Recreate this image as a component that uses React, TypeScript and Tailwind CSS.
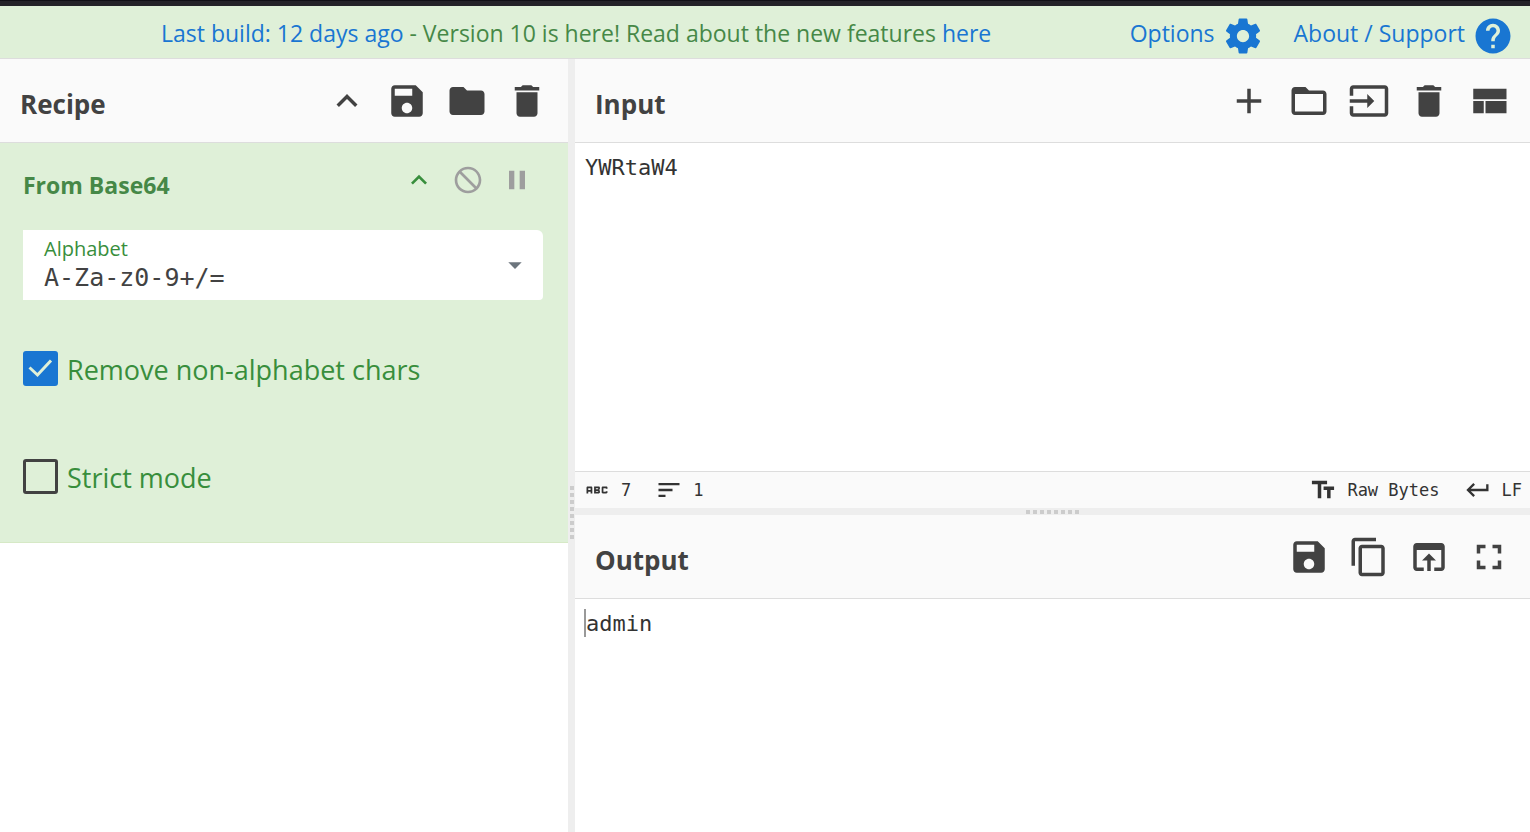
import { useState } from "react";
import type { ReactNode } from "react";

const ICONS = {
  expandLess: "M12 8l-6 6 1.41 1.41L12 10.83l4.59 4.58L18 14z",
  keyboardUp: "M7.41 15.41L12 10.83l4.59 4.58L18 14l-6-6-6 6z",
  save: "M17 3H5c-1.11 0-2 .9-2 2v14c0 1.1.89 2 2 2h14c1.1 0 2-.9 2-2V7l-4-4zm-5 16c-1.66 0-3-1.34-3-3s1.34-3 3-3 3 1.34 3 3-1.34 3-3 3zm3-10H5V5h10v4z",
  folder: "M10 4H4c-1.1 0-1.99.9-1.99 2L2 18c0 1.1.9 2 2 2h16c1.1 0 2-.9 2-2V8c0-1.1-.9-2-2-2h-8l-2-2z",
  folderOpen:
    "M20 6h-8l-2-2H4c-1.1 0-1.99.9-1.99 2L2 18c0 1.1.9 2 2 2h16c1.1 0 2-.9 2-2V8c0-1.1-.9-2-2-2zm0 12H4V8h16v10z",
  trash: "M6 19c0 1.1.9 2 2 2h8c1.1 0 2-.9 2-2V7H6v12zM19 4h-3.5l-1-1h-5l-1 1H5v2h14V4z",
  add: "M19 13h-6v6h-2v-6H5v-2h6V5h2v6h6v2z",
  input:
    "M21 3.01H3c-1.1 0-2 .9-2 2V9h2V4.99h18v14.03H3V15H1v4.01c0 1.1.9 1.98 2 1.98h18c1.1 0 2-.88 2-1.98v-14c0-1.11-.9-2-2-2zM11 16l4-4-4-4v3H1v2h10v3z",
  viewCompact: "M3 19h6v-7H3v7zm7 0h12v-7H10v7zM3 5v6h19V5H3z",
  copy: "M16 1H4c-1.1 0-2 .9-2 2v14h2V3h12V1zm3 4H8c-1.1 0-2 .9-2 2v14c0 1.1.9 2 2 2h11c1.1 0 2-.9 2-2V7c0-1.1-.9-2-2-2zm0 16H8V7h11v14z",
  openInBrowser:
    "M19 4H5c-1.11 0-2 .9-2 2v12c0 1.1.89 2 2 2h4v-2H5V8h14v10h-4v2h4c1.1 0 2-.9 2-2V6c0-1.1-.89-2-2-2zm-7 6l-4 4h3v6h2v-6h3l-4-4z",
  fullscreen: "M7 14H5v5h5v-2H7v-3zm-2-4h2V7h3V5H5v5zm12 7h-3v2h5v-5h-2v3zM14 5v2h3v3h2V5h-5z",
  disable:
    "M12 2C6.48 2 2 6.48 2 12s4.48 10 10 10 10-4.48 10-10S17.52 2 12 2zm0 18c-4.42 0-8-3.58-8-8 0-1.85.63-3.55 1.69-4.9L16.9 18.31C15.55 19.37 13.85 20 12 20zm6.31-3.1L7.1 5.69C8.45 4.63 10.15 4 12 4c4.42 0 8 3.58 8 8 0 1.85-.63 3.55-1.69 4.9z",
  pause: "M6 19h4V5H6v14zm8-14v14h4V5h-4z",
  settings:
    "M19.43 12.98c.04-.32.07-.64.07-.98s-.03-.66-.07-.98l2.11-1.65c.19-.15.24-.42.12-.64l-2-3.46c-.12-.22-.39-.3-.61-.22l-2.49 1c-.52-.4-1.08-.73-1.69-.98l-.38-2.65C14.46 2.18 14.25 2 14 2h-4c-.25 0-.46.18-.49.42l-.38 2.65c-.61.25-1.17.59-1.69.98l-2.49-1c-.23-.09-.49 0-.61.22l-2 3.46c-.13.22-.07.49.12.64l2.11 1.65c-.04.32-.07.65-.07.98s.03.66.07.98l-2.11 1.65c-.19.15-.24.42-.12.64l2 3.46c.12.22.39.3.61.22l2.49-1c.52.4 1.08.73 1.69.98l.38 2.65c.03.24.24.42.49.42h4c.25 0 .46-.18.49-.42l.38-2.65c.61-.25 1.17-.59 1.69-.98l2.49 1c.23.09.49 0 .61-.22l2-3.46c.12-.22.07-.49-.12-.64l-2.11-1.65zM12 15.5c-1.93 0-3.5-1.57-3.5-3.5s1.57-3.5 3.5-3.5 3.5 1.57 3.5 3.5-1.57 3.5-3.5 3.5z",
  help: "M12 2C6.48 2 2 6.48 2 12s4.48 10 10 10 10-4.48 10-10S17.52 2 12 2zm1 17h-2v-2h2v2zm2.07-7.75l-.9.92C13.45 12.9 13 13.5 13 15h-2v-.5c0-1.1.45-2.1 1.17-2.83l1.24-1.26c.37-.36.59-.86.59-1.41 0-1.1-.9-2-2-2s-2 .9-2 2H8c0-2.21 1.79-4 4-4s4 1.79 4 4c0 .88-.36 1.68-.93 2.25z",
  dropDown: "M7 10l5 5 5-5z",
  abc: "M21 11h-1.5v-.5h-2v3h2V13H21v1c0 .55-.45 1-1 1h-3c-.55 0-1-.45-1-1v-4c0-.55.45-1 1-1h3c.55 0 1 .45 1 1v1zM8 10v5H6.5v-1.5h-2V15H3v-5c0-.55.45-1 1-1h3c.55 0 1 .45 1 1zm-1.5.5h-2V12h2v-1.5zm7 1.5c.55 0 1 .45 1 1v1c0 .55-.45 1-1 1h-4V9h4c.55 0 1 .45 1 1v1c0 .55-.45 1-1 1zM11 10.5v.75h2v-.75h-2zm2 2.25h-2v.75h2v-.75z",
  sort: "M3 18h6v-2H3v2zM3 6v2h18V6H3zm0 7h12v-2H3v2z",
  textFields: "M2.5 4v3h5v12h3V7h5V4h-13zm19 5h-9v3h3v7h3v-7h3V9z",
  keyboardReturn: "M19 7v4H5.83l3.58-3.59L8 6l-6 6 6 6 1.41-1.41L5.83 13H21V7z",
};

type IconName = keyof typeof ICONS;

function Icon({ name, className }: { name: IconName; className: string }) {
  return (
    <svg viewBox="0 0 24 24" fill="currentColor" aria-hidden="true" className={`shrink-0 ${className}`}>
      <path d={ICONS[name]} />
    </svg>
  );
}

function IconButton({ name, label, size = "size-[42px]" }: { name: IconName; label: string; size?: string }) {
  return (
    <button type="button" aria-label={label} title={label} className="cursor-pointer">
      <Icon name={name} className={size} />
    </button>
  );
}

function TitleBar({ title, children }: { title: string; children: ReactNode }) {
  return (
    <div className="flex h-[84px] shrink-0 items-center justify-between border-b border-[#ddd] bg-[#fafafa] px-5 text-[#424242]">
      <h2 className="pt-[6px] text-[26px] leading-8 font-bold">{title}</h2>
      <div className="flex gap-[18px]">{children}</div>
    </div>
  );
}

function Dots({ vertical = false }: { vertical?: boolean }) {
  return (
    <div className={vertical ? "flex flex-col gap-[3px]" : "flex gap-[3px]"} aria-hidden="true">
      {Array.from({ length: 8 }, (_, i) => (
        <span key={i} className="size-1 bg-[#ccc]" />
      ))}
    </div>
  );
}

function CheckOption({ id, label, initial }: { id: string; label: string; initial: boolean }) {
  const [checked, setChecked] = useState(initial);
  return (
    <div className="flex items-start gap-[9px]">
      <span className="grid size-[35px] shrink-0">
        <input
          id={id}
          type="checkbox"
          checked={checked}
          onChange={(e) => setChecked(e.target.checked)}
          className="peer col-start-1 row-start-1 size-[35px] appearance-none rounded-[3px] border-3 border-[#424242] checked:border-[#1976d2] checked:bg-[#1976d2]"
        />
        <svg
          viewBox="0 0 35 35"
          fill="none"
          stroke="#dff0d8"
          strokeWidth="3"
          aria-hidden="true"
          className="pointer-events-none invisible col-start-1 row-start-1 size-[35px] peer-checked:visible"
        >
          <path d="M6.5 16.5l8 7.5L28 9.5" />
        </svg>
      </span>
      <label htmlFor={id} className="text-[27px] leading-[37px] text-[#388e3c]">
        {label}
      </label>
    </div>
  );
}

function Banner() {
  return (
    <header className="flex h-[53px] shrink-0 items-center justify-between border-b border-[#ddd] bg-[#dff0d8] pr-4 pl-[161px] text-[23px] leading-8 whitespace-nowrap text-[#468847]">
      <p className="pt-[2px]">
        <a href="#build" className="text-[#1976d2]">
          Last build: 12 days ago
        </a>{" "}
        - Version 10 is here! Read about the new features{" "}
        <a href="#features" className="text-[#1976d2]">
          here
        </a>
      </p>
      <nav className="flex gap-[30px] pt-[2px] text-[#1976d2]">
        <a href="#options" className="flex items-center gap-[7px]">
          Options
          <Icon name="settings" className="mt-[6px] size-[42px]" />
        </a>
        <a href="#support" className="flex items-center gap-[7px]">
          About / Support
          <Icon name="help" className="mt-[6px] size-[42px]" />
        </a>
      </nav>
    </header>
  );
}

function Recipe() {
  const [alphabet, setAlphabet] = useState("A-Za-z0-9+/=");
  return (
    <section className="flex min-h-0 min-w-0 flex-col">
      <TitleBar title="Recipe">
        <IconButton name="keyboardUp" label="Hide arguments" />
        <IconButton name="save" label="Save recipe" />
        <IconButton name="folder" label="Load recipe" />
        <IconButton name="trash" label="Clear recipe" />
      </TitleBar>
      <div className="border-b border-[#d6e9c6] bg-[#dff0d8] pt-[21px] pr-[25px] pb-[46px] pl-[23px]">
        <div className="flex items-start justify-between pr-[10px] text-[#9e9e9e]">
          <h3 className="pt-[5px] text-[23px] leading-8 font-bold text-[#468847]">From Base64</h3>
          <div className="flex gap-[17px]">
            <span className="flex text-[#388e3c]">
              <IconButton name="expandLess" label="Hide operation arguments" size="size-8" />
            </span>
            <IconButton name="disable" label="Disable operation" size="size-8" />
            <IconButton name="pause" label="Set breakpoint" size="size-8" />
          </div>
        </div>
        <div className="mt-[29px] flex h-[70px] items-center rounded-tr-md rounded-br-sm bg-white">
          <div className="flex min-w-0 flex-1 flex-col pl-[21px]">
            <label htmlFor="alphabet" className="text-[20px] leading-[26px] text-[#388e3c]">
              Alphabet
            </label>
            <input
              id="alphabet"
              value={alphabet}
              onChange={(e) => setAlphabet(e.target.value)}
              className="h-8 w-full font-['DejaVu_Sans_Mono',monospace] text-[25px] leading-8 text-[#424242] outline-none"
            />
          </div>
          <button type="button" aria-label="Choose alphabet" className="px-3 text-[#6c757d]">
            <Icon name="dropDown" className="size-8" />
          </button>
        </div>
        <div className="mt-[51px] flex flex-col gap-[71px]">
          <CheckOption id="remove" label="Remove non-alphabet chars" initial={true} />
          <CheckOption id="strict" label="Strict mode" initial={false} />
        </div>
      </div>
    </section>
  );
}

function InputPane() {
  const [text, setText] = useState("YWRtaW4");
  return (
    <section className="flex min-h-0 min-w-0 flex-col">
      <TitleBar title="Input">
        <IconButton name="add" label="Add a new input tab" />
        <IconButton name="folderOpen" label="Open folder as input" />
        <IconButton name="input" label="Open file as input" />
        <IconButton name="trash" label="Clear input and output" />
        <IconButton name="viewCompact" label="Reset pane layout" />
      </TitleBar>
      <textarea
        aria-label="Input"
        value={text}
        onChange={(e) => setText(e.target.value)}
        className="min-h-0 flex-1 resize-none p-[10px] font-['DejaVu_Sans_Mono',monospace] text-[22px] leading-[30px] text-[#333] outline-none"
      />
      <div className="flex h-[37px] shrink-0 items-center justify-between border-t border-[#ddd] bg-[#fafafa] px-2 font-['DejaVu_Sans_Mono',monospace] text-[17px] leading-6 text-[#333]">
        <div className="flex items-center gap-6">
          <span className="flex items-center gap-[10px]">
            <Icon name="abc" className="size-7" />7
          </span>
          <span className="flex items-center gap-[10px]">
            <Icon name="sort" className="size-7" />1
          </span>
        </div>
        <div className="flex items-center gap-6">
          <button type="button" className="flex items-center gap-[10px]">
            <Icon name="textFields" className="size-7" />
            Raw Bytes
          </button>
          <button type="button" className="flex items-center gap-[10px]">
            <Icon name="keyboardReturn" className="size-7" />
            LF
          </button>
        </div>
      </div>
    </section>
  );
}

function OutputPane() {
  return (
    <section className="flex min-h-0 min-w-0 flex-col">
      <TitleBar title="Output">
        <IconButton name="save" label="Save output to file" />
        <IconButton name="copy" label="Copy raw output" />
        <IconButton name="openInBrowser" label="Replace input with output" />
        <IconButton name="fullscreen" label="Maximise output pane" />
      </TitleBar>
      <div className="flex min-h-0 flex-1 items-start px-[9px] py-[10px] font-['DejaVu_Sans_Mono',monospace] text-[22px] leading-[30px] text-[#333]">
        <span className="h-7 w-[2px] bg-[#999]" />
        <output>admin</output>
      </div>
    </section>
  );
}

export default function App() {
  return (
    <div className="flex h-screen flex-col overflow-hidden bg-white font-['Open_Sans','Noto_Sans',sans-serif]">
      <div className="h-[6px] shrink-0 border-t border-[#111017] bg-[#242329]" />
      <Banner />
      <main className="grid min-h-0 flex-1 grid-cols-[568fr_7px_955fr]">
        <Recipe />
        <div className="flex flex-col items-center justify-center bg-[#eee] pt-[134px]">
          <Dots vertical />
        </div>
        <div className="grid min-h-0 grid-rows-[449fr_7px_317fr]">
          <InputPane />
          <div className="flex items-center justify-center bg-[#eee]">
            <Dots />
          </div>
          <OutputPane />
        </div>
      </main>
    </div>
  );
}
